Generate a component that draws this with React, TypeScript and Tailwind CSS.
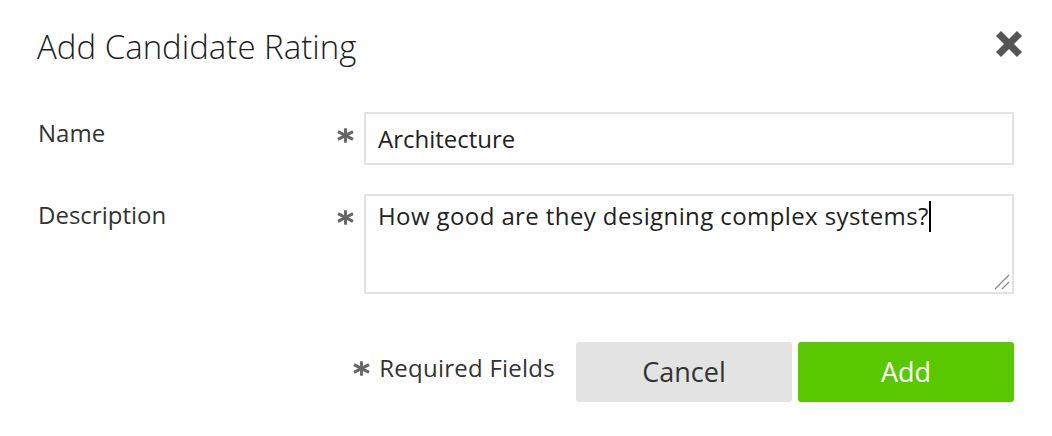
import React from "react";

function Asterisk({ className = "" }: { className?: string }) {
  return (
    <svg width="17" height="15" viewBox="0 0 17 15" className={className}>
      <g stroke="#666" strokeWidth="2.9" strokeLinecap="butt">
        <line x1="8.5" y1="0.3" x2="8.5" y2="14.7" />
        <line x1="1" y1="3.6" x2="16" y2="11.4" />
        <line x1="1" y1="11.4" x2="16" y2="3.6" />
      </g>
    </svg>
  );
}

function CloseIcon() {
  return (
    <svg width="26" height="26" viewBox="0 0 26 26">
      <g stroke="#555" strokeWidth="7" strokeLinecap="butt">
        <line x1="2.5" y1="2.5" x2="23.5" y2="23.5" />
        <line x1="23.5" y1="2.5" x2="2.5" y2="23.5" />
      </g>
    </svg>
  );
}

export default function App() {
  return (
    <div className="w-[1052px] h-[436px] bg-white px-[38px] pt-[27px] font-['Open_Sans',sans-serif] text-[#2a2a2a]">
      <div className="flex items-start justify-between">
        <h1 className="-ml-px text-[33px] leading-[40px] font-light text-[#1e1e1e]">
          Add Candidate Rating
        </h1>
        <button className="mt-[4px] mr-[-8px]" aria-label="Close">
          <CloseIcon />
        </button>
      </div>

      <div className="mt-[45px] flex items-start">
        <label className="w-[292px] pt-[5px] text-[24px] leading-[32px] text-[#333]">Name</label>
        <div className="w-[34px] flex justify-end pr-[10px] mt-[16px]">
          <Asterisk />
        </div>
        <div className="flex-1 h-[53px] border-2 border-[#e2e2e2] pl-3 flex items-center text-[24px] leading-[32px] text-[#222]">
          Architecture
        </div>
      </div>

      <div className="mt-[29px] flex items-start">
        <label className="w-[292px] pt-[5px] text-[24px] leading-[32px] text-[#333]">Description</label>
        <div className="w-[34px] flex justify-end pr-[10px] mt-[16px]">
          <Asterisk />
        </div>
        <div className="relative flex-1 h-[100px] border-2 border-[#e2e2e2] pl-3 pt-[4px] text-[24px] leading-[32px] tracking-[0.4px] text-[#222]">
          <span>How good are they designing complex systems?</span>
          <span className="inline-block w-[2px] h-[31px] bg-black align-[-7px]" />
          <svg
            width="16"
            height="16"
            viewBox="0 0 16 16"
            className="absolute right-[2px] bottom-[2px]"
          >
            <g stroke="#8a8a8a" strokeWidth="1.3">
              <line x1="1" y1="15" x2="15" y2="1" />
              <line x1="8" y1="15" x2="15" y2="8" />
            </g>
          </svg>
        </div>
      </div>

      <div className="mt-[48px] flex items-start justify-end">
        <div className="flex items-start mr-[21px]">
          <Asterisk className="mt-[19px]" />
          <span className="ml-[9px] mt-[10px] text-[24px] leading-[32px] tracking-[0.25px] text-[#333]">Required Fields</span>
        </div>
        <button className="w-[216px] h-[60px] rounded-[3px] bg-[#e3e3e3] text-[27px] text-[#333]">
          Cancel
        </button>
        <button className="ml-[6px] w-[216px] h-[60px] rounded-[3px] bg-[#5ac800] text-[27px] text-white">
          Add
        </button>
      </div>
    </div>
  );
}
